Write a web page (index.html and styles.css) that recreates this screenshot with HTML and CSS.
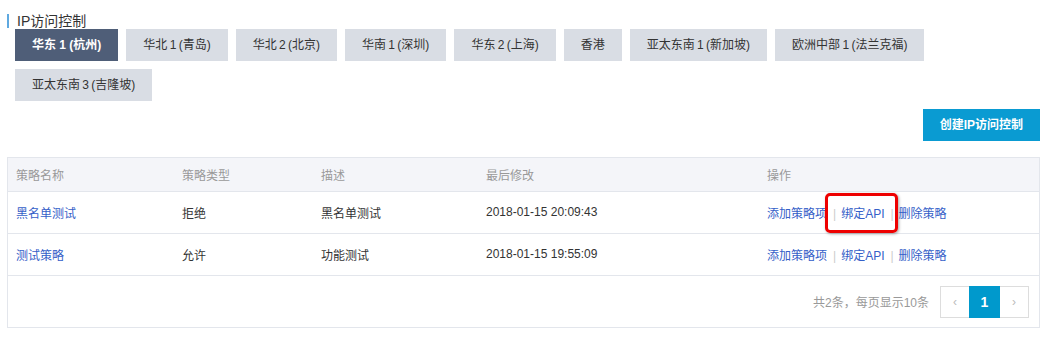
FILE: index.html
```html
<!DOCTYPE html>
<html lang="zh">
<head>
<meta charset="utf-8">
<link rel="stylesheet" href="styles.css">
</head>
<body>
<div class="page">
  <div class="title">IP访问控制</div>
  <div class="regions">
    <span class="region active">华东 1 (杭州)</span>
    <span class="region">华北 1 (青岛)</span>
    <span class="region">华北 2 (北京)</span>
    <span class="region">华南 1 (深圳)</span>
    <span class="region">华东 2 (上海)</span>
    <span class="region">香港</span>
    <span class="region">亚太东南 1 (新加坡)</span>
    <span class="region">欧洲中部 1 (法兰克福)</span>
    <span class="region">亚太东南 3 (吉隆坡)</span>
  </div>
  <div class="toolbar">
    <span class="create-btn">创建IP访问控制</span>
  </div>
  <div class="panel">
    <table class="grid">
      <colgroup>
        <col class="c1"><col class="c2"><col class="c3"><col class="c4"><col class="c5">
      </colgroup>
      <thead>
        <tr><th>策略名称</th><th>策略类型</th><th>描述</th><th>最后修改</th><th>操作</th></tr>
      </thead>
      <tbody>
        <tr>
          <td><span class="link">黑名单测试</span></td>
          <td>拒绝</td>
          <td>黑名单测试</td>
          <td>2018-01-15 20:09:43</td>
          <td class="ops"><span class="link">添加策略项</span><span class="sep">|</span><span class="link marked">绑定API</span><span class="sep">|</span><span class="link">删除策略</span></td>
        </tr>
        <tr>
          <td><span class="link">测试策略</span></td>
          <td>允许</td>
          <td>功能测试</td>
          <td>2018-01-15 19:55:09</td>
          <td class="ops"><span class="link">添加策略项</span><span class="sep">|</span><span class="link">绑定API</span><span class="sep">|</span><span class="link">删除策略</span></td>
        </tr>
      </tbody>
    </table>
    <div class="footer">
      <span class="total">共2条，每页显示10条</span>
      <div class="pager">
        <span class="pg prev">‹</span>
        <span class="pg current">1</span>
        <span class="pg next">›</span>
      </div>
    </div>
  </div>
</div>
</body>
</html>
```

FILE: styles.css
```css
* { box-sizing: border-box; }
html, body { margin: 0; padding: 0; background: #fff; }
body {
  font-family: "Liberation Sans", "Noto Sans CJK SC", sans-serif;
  font-size: 12px;
  color: #333;
}
.page {
  width: 1054px;
  padding: 14px 14px 0 7px;
}
.title {
  border-left: 2px solid #5fa9e0;
  padding-left: 8px;
  font-size: 14px;
  line-height: 14px;
  height: 14px;
  color: #333;
}
.regions {
  display: flex;
  flex-wrap: wrap;
  gap: 8px;
  margin: 1px 0 0 8px;
  width: 1000px;
}
.region {
  height: 32px;
  line-height: 32px;
  padding: 0 17px;
  background: #d9dde4;
  color: #333;
  white-space: nowrap;
  word-spacing: -1px;
}
.region.active {
  background: #4f5e78;
  color: #fff;
  font-weight: bold;
  word-spacing: 0;
}
.toolbar {
  display: flex;
  justify-content: flex-end;
  margin-top: 8px;
}
.create-btn {
  height: 32px;
  line-height: 32px;
  padding: 0 17px;
  background: #0a9bd2;
  color: #fff;
  font-weight: bold;
}
.panel {
  margin-top: 16px;
  border: 1px solid #e3e6ec;
}
.grid {
  width: 100%;
  border-collapse: collapse;
  table-layout: fixed;
}
.c1 { width: 166px; }
.c2 { width: 139px; }
.c3 { width: 165px; }
.c4 { width: 281px; }
.grid th {
  height: 33px;
  background: #f4f5f9;
  color: #999;
  font-weight: normal;
  text-align: left;
  padding: 0 0 0 8px;
  border-bottom: 1px solid #e3e6ec;
}
.grid td {
  height: 42px;
  padding: 0 0 0 8px;
  border-bottom: 1px solid #e3e6ec;
  color: #333;
  white-space: nowrap;
}
.link { color: #3560c8; }
.sep {
  color: #ccc;
  margin: 0 5px 0 6px;
}
.marked { position: relative; }
.marked::after {
  content: "";
  position: absolute;
  left: -16px;
  right: -14px;
  top: -14px;
  bottom: -12px;
  border: 3px solid #ee0000;
  border-radius: 5px;
  box-shadow: 1px 1px 3px rgba(0,0,0,0.35);
}
.footer {
  display: flex;
  justify-content: flex-end;
  align-items: center;
  padding: 10px 10px 9px 0;
}
.total {
  color: #999;
  margin-right: 11px;
}
.pager { display: flex; }
.pg {
  height: 32px;
  line-height: 30px;
  text-align: center;
  border: 1px solid #ddd;
  color: #bbb;
  font-size: 12px;
}
.prev, .next { width: 29px; }
.prev { border-right: none; }
.next { border-left: none; }
.current {
  width: 31px;
  background: #0099cc;
  border-color: #0099cc;
  color: #fff;
  font-weight: bold;
  font-size: 14px;
}
```
